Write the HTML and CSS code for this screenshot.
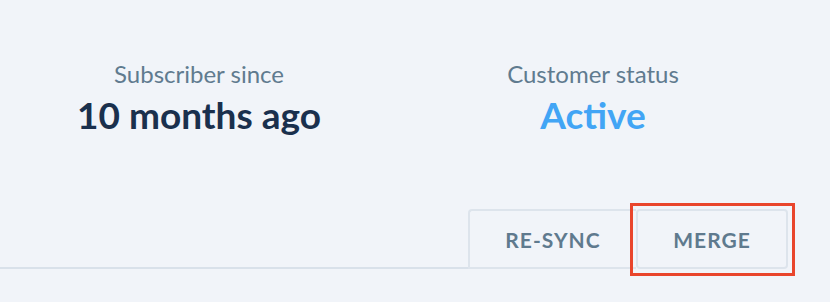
FILE: index.html
```html
<!DOCTYPE html>
<html>
<head>
<meta charset="utf-8">
<link rel="stylesheet" href="styles.css">
</head>
<body>
<div class="page">
  <div class="stats">
    <div class="stat">
      <div class="label">Subscriber since</div>
      <div class="value">10 months ago</div>
    </div>
    <div class="stat">
      <div class="label">Customer status</div>
      <div class="value active">Active</div>
    </div>
  </div>
  <div class="toolbar">
    <div class="rule"></div>
    <div class="buttons">
      <button class="btn resync">RE-SYNC</button>
      <button class="btn merge">MERGE</button>
    </div>
    <div class="tail"></div>
  </div>
</div>
</body>
</html>
```
FILE: styles.css
```css
html, body {
  margin: 0;
  padding: 0;
  background: #f1f4f9;
  font-family: Lato, "Open Sans", sans-serif;
}
.page {
  width: 830px;
  height: 302px;
  overflow: hidden;
}
.stats {
  display: grid;
  grid-template-columns: 394px 394px;
  padding-left: 2px;
  padding-top: 59px;
}
.stat {
  text-align: center;
}
.label {
  font-size: 24px;
  color: #607b8f;
  line-height: 30px;
}
.value {
  font-size: 37px;
  font-weight: 700;
  color: #1a304d;
  line-height: 44px;
  margin-top: 4px;
}
.value.active {
  color: #42a5f5;
}
.toolbar {
  display: flex;
  align-items: flex-end;
  margin-top: 72px;
}
.rule {
  flex: 1;
  border-bottom: 2px solid #d9e1ea;
}
.buttons {
  display: flex;
}
.btn {
  font-family: Lato, "Open Sans", sans-serif;
  font-size: 21px;
  font-weight: 700;
  letter-spacing: 1px;
  color: #5f7a8e;
  background: #f1f4f9;
  height: 60px;
  border: 2px solid #dde4ec;
  padding: 0;
  margin: 0;
}
.resync {
  width: 168px;
  border-right: none;
  border-radius: 4px 0 0 0;
}
.merge {
  position: relative;
  width: 152px;
  border-radius: 4px;
}
.merge::after {
  content: "";
  position: absolute;
  top: -8px;
  left: -8px;
  right: -9px;
  bottom: -9px;
  border: 3px solid #e9452c;
}
.tail {
  width: 42px;
}
```
